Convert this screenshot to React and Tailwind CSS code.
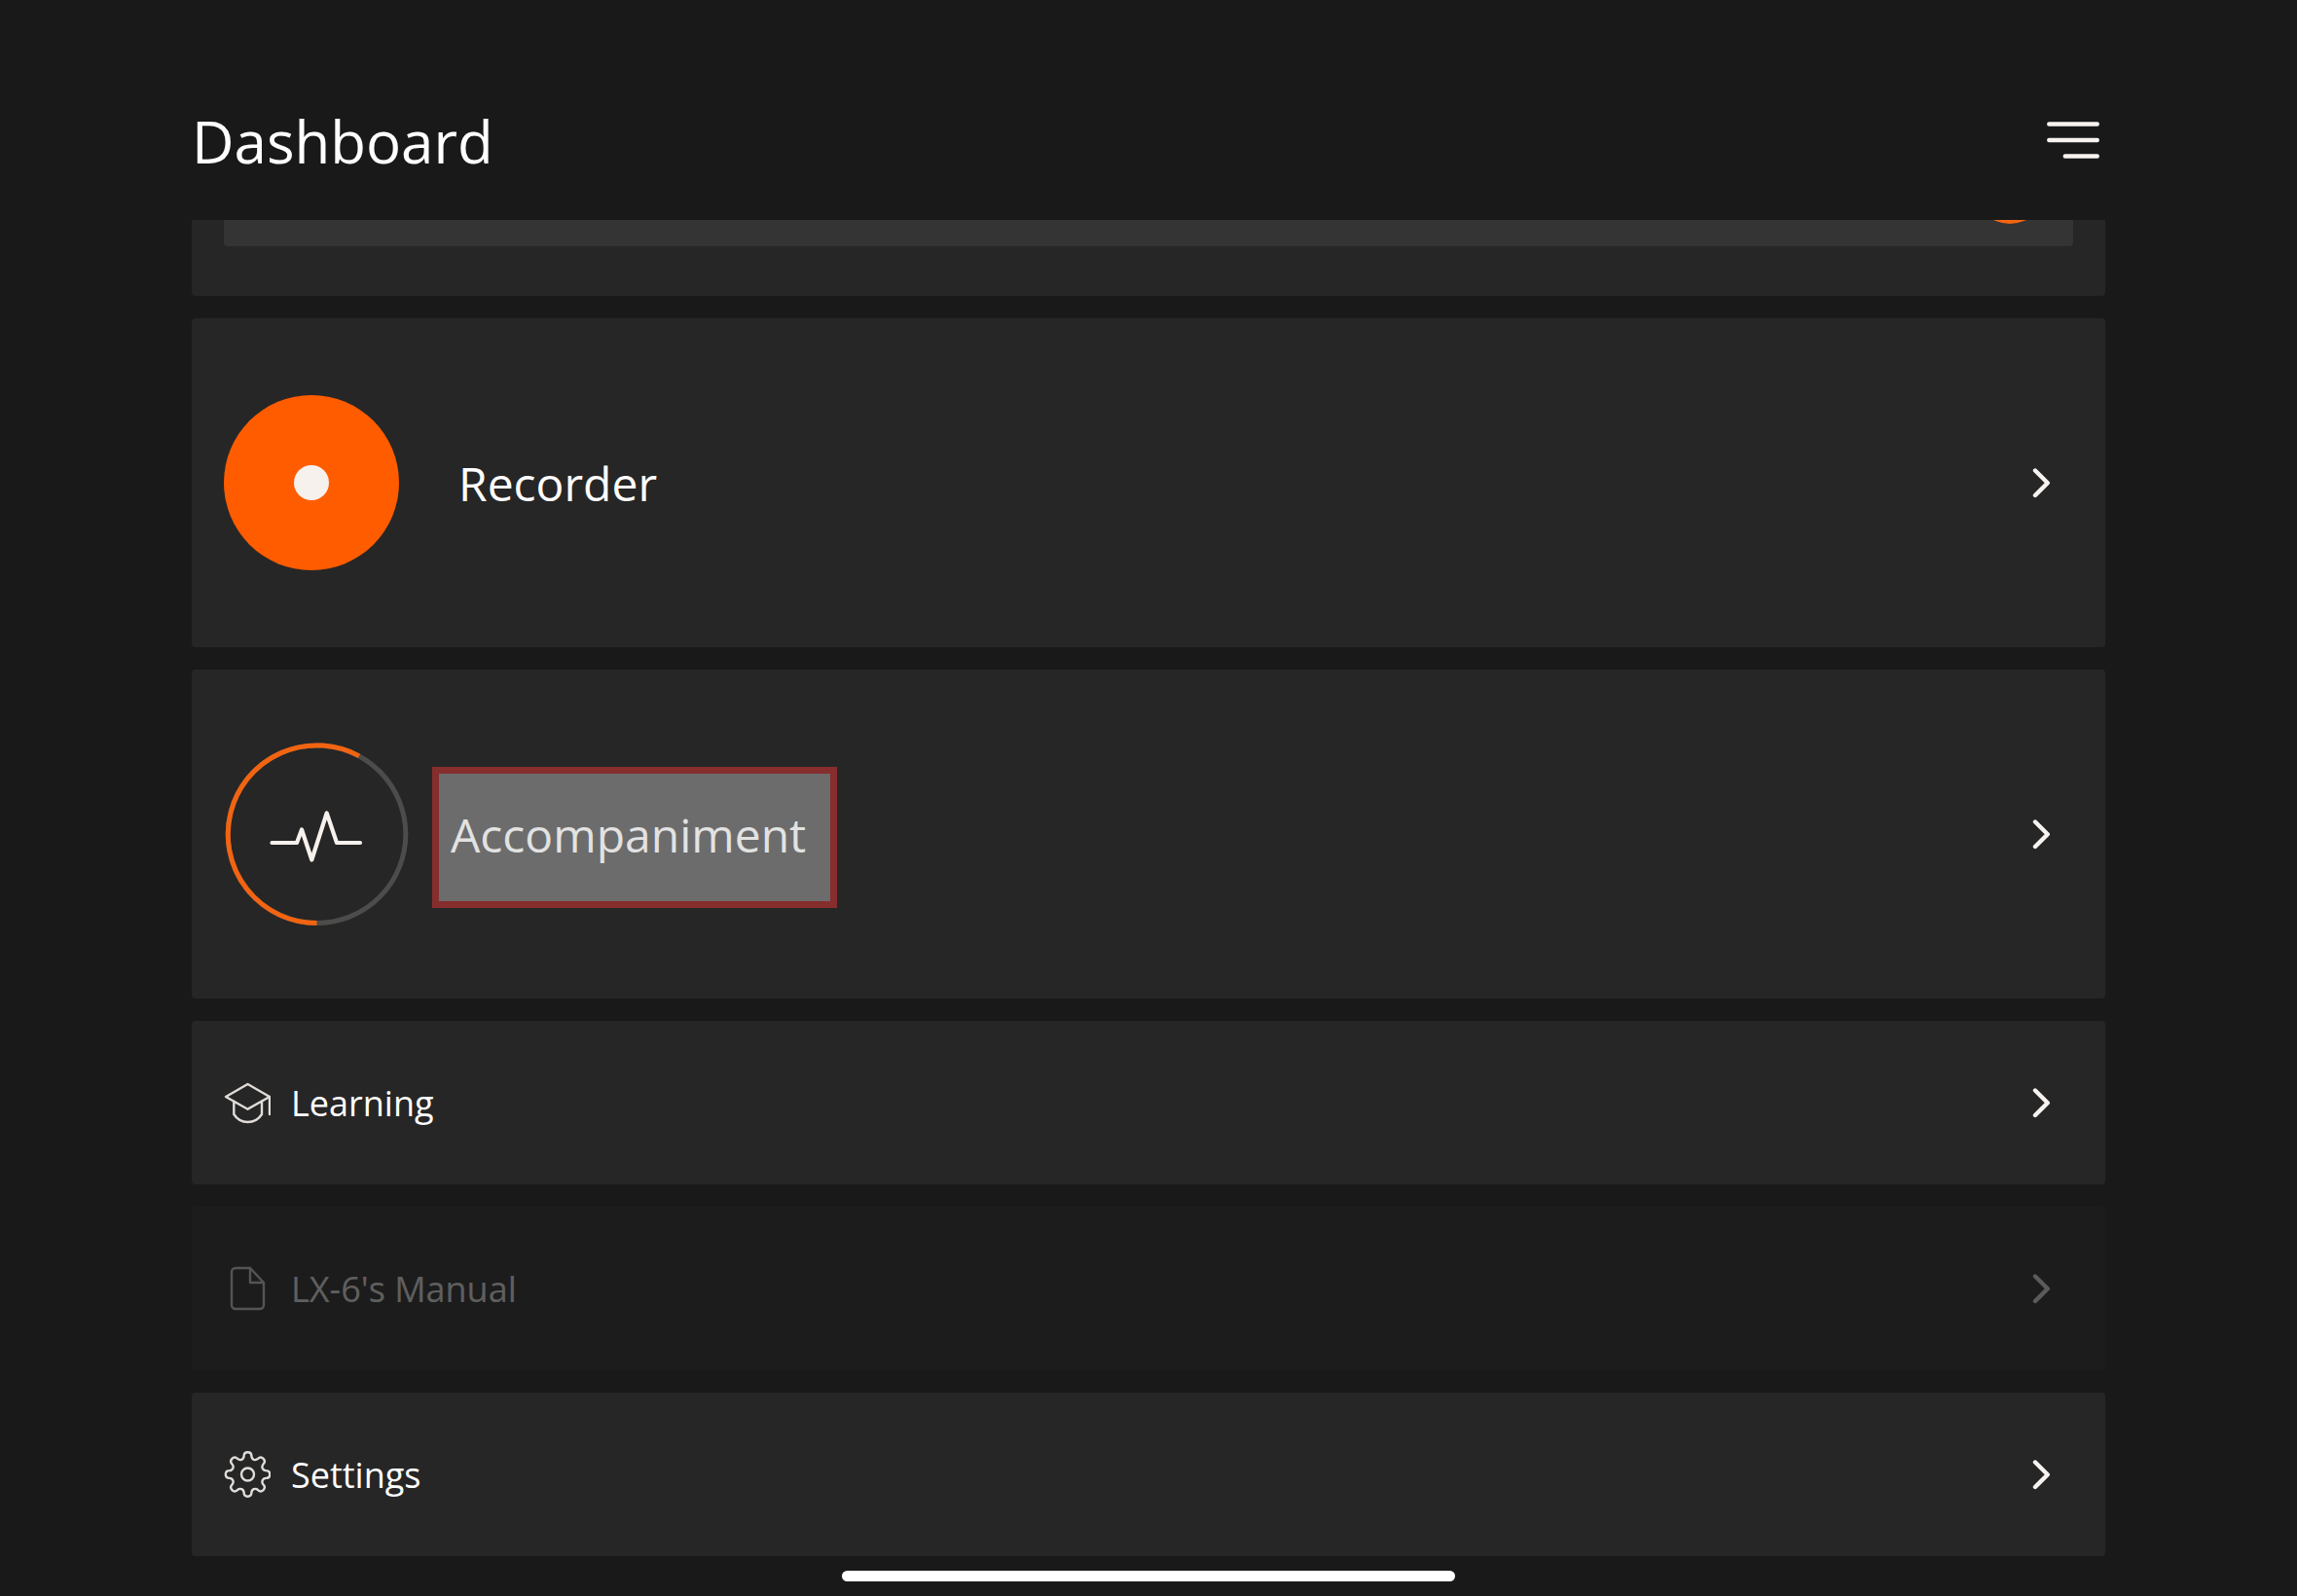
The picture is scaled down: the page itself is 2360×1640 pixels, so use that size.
const round = (n) => Math.round(n * 100) / 100;

// Eight round teeth joined by smooth valleys, centred on 24.5,24
const tooth = [
  [-4.9, -15.8], [-4, -16.4], [-3.9, -18.8],
  [-3.8, -24], [3.8, -24], [3.9, -18.8],
  [4, -16.4], [4.9, -15.8], [6.3, -15.2],
];

function gearPath() {
  let d = 'M18.2 8.8';
  for (let i = 0; i < 8; i++) {
    const a = (i * Math.PI) / 4;
    const points = tooth.map(([x, y]) => {
      const px = 24.5 + x * Math.cos(a) - y * Math.sin(a);
      const py = 24 + x * Math.sin(a) + y * Math.cos(a);
      return `${round(px)} ${round(py)}`;
    });
    d += ` C${points.join(' ')}`;
  }
  return `${d}Z`;
}

const iconProps = {
  viewBox: '0 0 48 48',
  fill: 'none',
  stroke: 'currentColor',
  strokeWidth: 2.4,
  strokeLinejoin: 'round',
  strokeLinecap: 'round',
  'aria-hidden': true,
  className: 'w-12 h-12 shrink-0 text-[#e0dcd9]',
};

function LearningIcon() {
  return (
    <svg {...iconProps}>
      <path d="M24.5 5 47 18 24.5 30.7 2 18Z" />
      <path d="M10.3 23v13c3.2 5 8.2 8 14.2 8s11.3-3 14.5-8V23M47 18v18" />
    </svg>
  );
}

function ManualIcon() {
  return (
    <svg {...iconProps}>
      <path d="M27 3H12a4 4 0 0 0-4 4v34a4 4 0 0 0 4 4h25a4 4 0 0 0 4-4V18L27 3v15h14" />
    </svg>
  );
}

function SettingsIcon() {
  return (
    <svg {...iconProps}>
      <path d={gearPath()} />
      <circle cx="24.5" cy="24" r="6.5" />
    </svg>
  );
}

function Chevron() {
  return (
    <svg viewBox="0 0 20 32" fill="none" aria-hidden="true" className="w-5 h-8 ml-auto shrink-0">
      <path d="M3 3.5 15.8 16.2 3 29" stroke="#f6f3f0" strokeWidth="4.4" strokeLinecap="round" strokeLinejoin="round" />
    </svg>
  );
}

function RecorderBadge() {
  return (
    <span className="flex items-center justify-center w-[180px] h-[180px] shrink-0 rounded-full bg-[#ff5c00]">
      <span className="w-9 h-9 rounded-full bg-[#f6f1ed]" />
    </span>
  );
}

function AccompanimentRing() {
  return (
    <svg viewBox="0 0 192 192" fill="none" aria-hidden="true" className="w-48 h-48 shrink-0">
      <circle cx="95.5" cy="96.2" r="91.3" stroke="#4d4c4b" strokeWidth="5" />
      <path d="M95.5 187.5A91.3 91.3 0 1 1 139 15.9" stroke="#f26411" strokeWidth="5" />
      <path
        d="M49.5 105H75l5-13.5 10.300 31 15.400-48L116 105h24"
        stroke="#f6f1ed"
        strokeWidth="4.2"
        strokeLinecap="round"
        strokeLinejoin="round"
      />
    </svg>
  );
}

function FeatureCard({ className, children }) {
  return (
    <button
      type="button"
      className={`flex items-center w-full h-[338px] pl-[33px] pr-[55px] rounded-[4px] bg-[#262626] text-left text-[48px] leading-[64px] ${className}`}
    >
      {children}
      <Chevron />
    </button>
  );
}

function LinkCard({ icon, label, disabled }) {
  return (
    <button
      type="button"
      disabled={disabled}
      className="flex items-center gap-[21px] w-full h-[168px] pl-[33px] pr-[55px] rounded-[4px] bg-[#262626] text-left text-[36px] leading-[48px] disabled:opacity-30"
    >
      {icon}
      <span className="pt-[2px]">{label}</span>
      <Chevron />
    </button>
  );
}

export default function App() {
  return (
    <div className="flex flex-col h-screen overflow-hidden bg-[#191919] text-white font-['Open_Sans',sans-serif]">
      <header className="flex items-center justify-between h-[226px] pt-[62px] px-[197px] shrink-0">
        <h1 className="pt-[2px] text-[60px] leading-[80px]">Dashboard</h1>
        <button type="button" aria-label="Menu" className="px-[6px]">
          <svg viewBox="0 0 54 38" fill="none" aria-hidden="true" className="w-[54px] h-[38px]">
            <path d="M2.3 2.5h49.4M2.3 19h49.4M18.8 35.5h32.9" stroke="#f6f3f0" strokeWidth="4.5" strokeLinecap="round" />
          </svg>
        </button>
      </header>

      <main className="flex flex-col gap-[23px] px-[197px] shrink-0">
        <section className="h-[78px] px-[33px] rounded-b-[4px] bg-[#262626]">
          <div className="relative h-[27px] overflow-hidden rounded-b-[4px] bg-[#343434]">
            <span className="absolute right-[27px] bottom-[23px] w-[76px] h-[76px] rounded-full bg-[#f26411]" />
          </div>
        </section>

        <FeatureCard className="gap-[61px]">
          <RecorderBadge />
          <span className="pt-[2px]">Recorder</span>
        </FeatureCard>

        <FeatureCard className="gap-[41px]">
          <AccompanimentRing />
          <span className="relative pt-[2px]">
            <span className="absolute -left-[19px] -top-[36px] w-[416px] h-[145px] border-[7px] border-[#862e2d] bg-[#6c6c6c]" />
            <span className="relative text-[#e2e2e2]">Accompaniment</span>
          </span>
        </FeatureCard>

        <LinkCard icon={<LearningIcon />} label="Learning" />
        <LinkCard icon={<ManualIcon />} label="LX-6's Manual" disabled />
        <LinkCard icon={<SettingsIcon />} label="Settings" />
      </main>

      <div className="w-[630px] h-[15px] pt-[4px] mt-[11px] mx-auto shrink-0">
        <div className="h-[11px] rounded-full bg-white" />
      </div>
    </div>
  );
}
